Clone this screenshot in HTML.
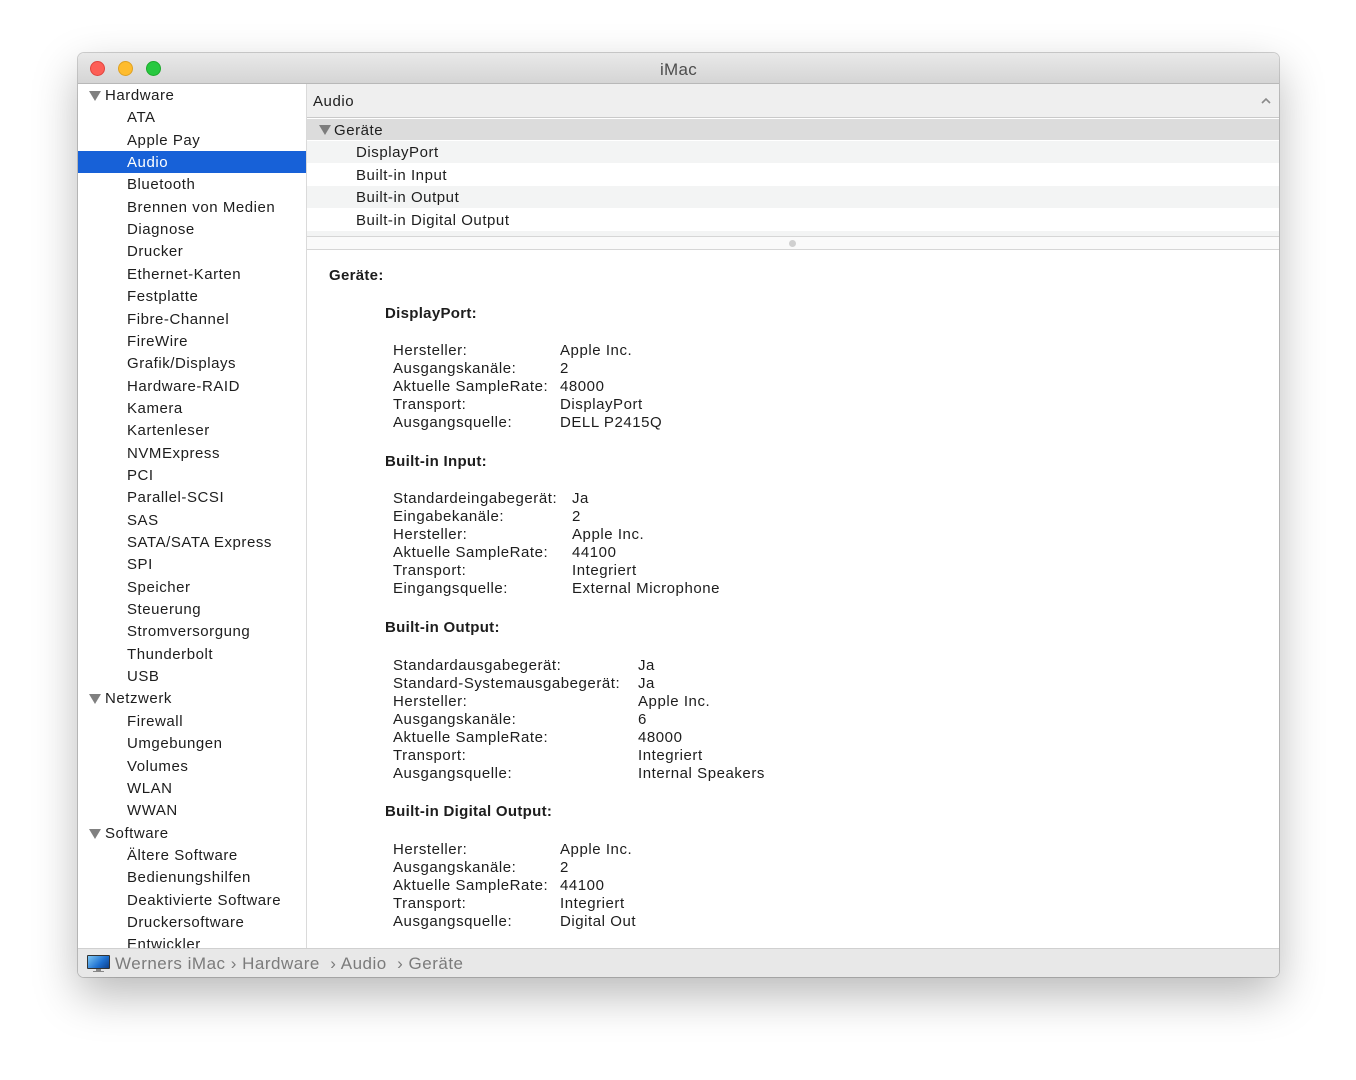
<!DOCTYPE html>
<html><head><meta charset="utf-8"><style>
*{margin:0;padding:0;box-sizing:border-box}
body{width:1356px;height:1080px;background:#fff;font-family:"Liberation Sans","DejaVu Sans",sans-serif;color:#1d1d1d;position:relative;overflow:hidden}
.win{position:absolute;left:78px;top:53px;width:1201px;height:924px;border-radius:6px;background:#fff;box-shadow:0 18px 45px rgba(0,0,0,.28),0 0 0 1px rgba(0,0,0,.18);overflow:hidden}
.title{position:absolute;left:0;top:0;width:100%;height:31px;background:linear-gradient(#e9e9e9,#d5d5d5);border-bottom:1px solid #b8b8b8;text-align:center;font-size:17px;line-height:33px;color:#4d4d4d;letter-spacing:.3px}
.dot{position:absolute;top:8px;width:15px;height:15px;border-radius:50%}
.side{position:absolute;left:0;top:31px;width:229px;height:864px;background:#fff;border-right:1px solid #dadada;overflow:hidden}
.si{position:absolute;left:0;width:228px;height:22.35px;line-height:24px;font-size:15px;white-space:nowrap;letter-spacing:.55px}
.si.c{padding-left:49px}
.si.g{padding-left:27px}
.si.g:before{content:"";position:absolute;left:11px;top:7px;border-left:6px solid transparent;border-right:6px solid transparent;border-top:10px solid #808080}
.sel{background:#1761d8;color:#fff}
.a{position:absolute;font-size:15px;line-height:18px;white-space:nowrap;letter-spacing:.55px}
.b{font-weight:bold;letter-spacing:.3px}
</style></head><body>
<div class="win">
<div class="title">iMac
<div class="dot" style="left:12px;background:#fd5f57;border:1px solid #e0443e"></div>
<div class="dot" style="left:40px;background:#febc2e;border:1px solid #dea123"></div>
<div class="dot" style="left:68px;background:#28c840;border:1px solid #1daa2c"></div>
</div>
<div class="side">
<div class="si g" style="top:0px">Hardware</div>
<div class="si c" style="top:22.35px">ATA</div>
<div class="si c" style="top:44.7px">Apple Pay</div>
<div class="si c sel" style="top:67.05px">Audio</div>
<div class="si c" style="top:89.4px">Bluetooth</div>
<div class="si c" style="top:111.75px">Brennen von Medien</div>
<div class="si c" style="top:134.1px">Diagnose</div>
<div class="si c" style="top:156.45px">Drucker</div>
<div class="si c" style="top:178.8px">Ethernet-Karten</div>
<div class="si c" style="top:201.15px">Festplatte</div>
<div class="si c" style="top:223.5px">Fibre-Channel</div>
<div class="si c" style="top:245.85px">FireWire</div>
<div class="si c" style="top:268.2px">Grafik/Displays</div>
<div class="si c" style="top:290.55px">Hardware-RAID</div>
<div class="si c" style="top:312.9px">Kamera</div>
<div class="si c" style="top:335.25px">Kartenleser</div>
<div class="si c" style="top:357.6px">NVMExpress</div>
<div class="si c" style="top:379.95px">PCI</div>
<div class="si c" style="top:402.3px">Parallel-SCSI</div>
<div class="si c" style="top:424.65px">SAS</div>
<div class="si c" style="top:447px">SATA/SATA Express</div>
<div class="si c" style="top:469.35px">SPI</div>
<div class="si c" style="top:491.7px">Speicher</div>
<div class="si c" style="top:514.05px">Steuerung</div>
<div class="si c" style="top:536.4px">Stromversorgung</div>
<div class="si c" style="top:558.75px">Thunderbolt</div>
<div class="si c" style="top:581.1px">USB</div>
<div class="si g" style="top:603.45px">Netzwerk</div>
<div class="si c" style="top:625.8px">Firewall</div>
<div class="si c" style="top:648.15px">Umgebungen</div>
<div class="si c" style="top:670.5px">Volumes</div>
<div class="si c" style="top:692.85px">WLAN</div>
<div class="si c" style="top:715.2px">WWAN</div>
<div class="si g" style="top:737.55px">Software</div>
<div class="si c" style="top:759.9px">Ältere Software</div>
<div class="si c" style="top:782.25px">Bedienungshilfen</div>
<div class="si c" style="top:804.6px">Deaktivierte Software</div>
<div class="si c" style="top:826.95px">Druckersoftware</div>
<div class="si c" style="top:849.3px">Entwickler</div>
</div>
<div style="position:absolute;left:229px;top:31px;width:972px;height:34px;background:#efefef;border-bottom:1px solid #c9c9c9"></div>
<div class="a" style="left:235px;top:40px">Audio</div>
<svg style="position:absolute;left:1183px;top:44px" width="10" height="7"><path d="M1 6 L5 2 L9 6" stroke="#8a8a8a" stroke-width="1.6" fill="none"/></svg>
<div style="position:absolute;left:229px;top:66px;width:972px;height:21px;background:#dcdcdc"></div>
<div style="position:absolute;left:241px;top:72px;border-left:6px solid transparent;border-right:6px solid transparent;border-top:10px solid #7d7d7d"></div>
<div class="a" style="left:256px;top:69px">Geräte</div>
<div style="position:absolute;left:229px;top:88px;width:972px;height:22px;background:#f3f4f4"></div>
<div style="position:absolute;left:229px;top:133px;width:972px;height:22px;background:#f3f4f4"></div>
<div style="position:absolute;left:229px;top:178px;width:972px;height:5px;background:#f3f4f4"></div>
<div class="a" style="left:278px;top:91px">DisplayPort</div>
<div class="a" style="left:278px;top:114px">Built-in Input</div>
<div class="a" style="left:278px;top:136px">Built-in Output</div>
<div class="a" style="left:278px;top:159px">Built-in Digital Output</div>
<div style="position:absolute;left:229px;top:183px;width:972px;height:14px;background:#fafafa;border-top:1px solid #d6d6d6;border-bottom:1px solid #d6d6d6"></div>
<div style="position:absolute;left:711px;top:187px;width:7px;height:7px;border-radius:50%;background:#d0d0d0"></div>
</div>
<div class="a b" style="left:329px;top:267px">Geräte:</div>
<div class="a b" style="left:385px;top:305px">DisplayPort:</div>
<div class="a" style="left:393px;top:342px">Hersteller:<br>Ausgangskanäle:<br>Aktuelle SampleRate:<br>Transport:<br>Ausgangsquelle:</div>
<div class="a" style="left:560px;top:342px">Apple Inc.<br>2<br>48000<br>DisplayPort<br>DELL P2415Q</div>
<div class="a b" style="left:385px;top:453px">Built-in Input:</div>
<div class="a" style="left:393px;top:490px">Standardeingabegerät:<br>Eingabekanäle:<br>Hersteller:<br>Aktuelle SampleRate:<br>Transport:<br>Eingangsquelle:</div>
<div class="a" style="left:572px;top:490px">Ja<br>2<br>Apple Inc.<br>44100<br>Integriert<br>External Microphone</div>
<div class="a b" style="left:385px;top:619px">Built-in Output:</div>
<div class="a" style="left:393px;top:657px">Standardausgabegerät:<br>Standard-Systemausgabegerät:<br>Hersteller:<br>Ausgangskanäle:<br>Aktuelle SampleRate:<br>Transport:<br>Ausgangsquelle:</div>
<div class="a" style="left:638px;top:657px">Ja<br>Ja<br>Apple Inc.<br>6<br>48000<br>Integriert<br>Internal Speakers</div>
<div class="a b" style="left:385px;top:803px">Built-in Digital Output:</div>
<div class="a" style="left:393px;top:841px">Hersteller:<br>Ausgangskanäle:<br>Aktuelle SampleRate:<br>Transport:<br>Ausgangsquelle:</div>
<div class="a" style="left:560px;top:841px">Apple Inc.<br>2<br>44100<br>Integriert<br>Digital Out</div>
<div style="position:absolute;left:78px;top:948px;width:1201px;height:29px;background:#e8e8e8;border-top:1px solid #d0d0d0;border-radius:0 0 6px 6px"></div>
<div style="position:absolute;left:87px;top:955px;width:23px;height:14px;background:linear-gradient(135deg,#7ec8f5,#1d6fd0 60%,#0d3f8a);border:1px solid #333;border-radius:1px"></div>
<div style="position:absolute;left:96px;top:969px;width:5px;height:3px;background:#888"></div>
<div style="position:absolute;left:93px;top:971px;width:11px;height:1px;background:#888"></div>
<div class="a" style="left:115px;top:954px;font-size:17px;line-height:20px;color:#7b7b7b;letter-spacing:.5px">Werners iMac › Hardware &nbsp;› Audio &nbsp;› Geräte</div>
</body></html>
